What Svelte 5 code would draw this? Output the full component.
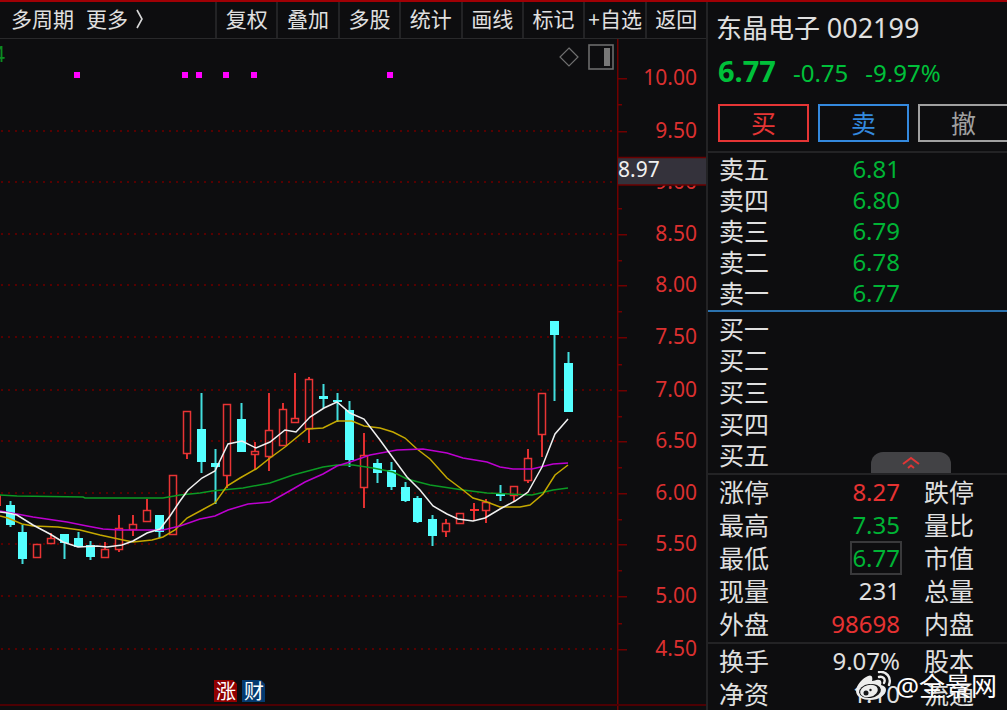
<script>
  const tools = ['复权', '叠加', '多股', '统计', '画线', '标记', '+自选', '返回'];

  const ticks = [
    ['10.00', 78], ['9.50', 131], ['9.00', 182], ['8.50', 234], ['8.00', 285], ['7.50', 337],
    ['7.00', 390], ['6.50', 441], ['6.00', 493], ['5.50', 544], ['5.00', 596], ['4.50', 649]
  ];
  const minorTicks = [104, 208, 260, 311, 364, 416, 467, 519, 570, 623];
  const eventDots = [77, 185, 199, 226, 254, 390];

  // x centre, body top, body bottom, wick top, wick bottom
  const rising = [
    [37, 544, 558, 544, 558], [51, 538, 544, 533, 544], [105, 549, 558, 542, 558],
    [119, 528, 550, 515, 552], [133, 524, 530, 515, 536], [147, 510, 522, 499, 522],
    [173, 475, 535, 475, 535], [187, 411, 454, 411, 459], [227, 404, 476, 404, 488],
    [255, 451, 455, 442, 469], [269, 430, 457, 393, 471], [283, 409, 446, 403, 446],
    [295, 418, 423, 373, 423], [309, 379, 429, 377, 443], [364, 455, 488, 433, 508],
    [446, 523, 532, 519, 537], [460, 513, 524, 513, 524], [474, 509, 511, 503, 521],
    [486, 502, 511, 499, 523], [514, 486, 496, 486, 501], [528, 458, 481, 449, 483],
    [542, 393, 435, 393, 457]
  ];
  const falling = [
    [10, 505, 525, 501, 527], [22, 532, 559, 525, 564], [64, 534, 543, 534, 559],
    [78, 538, 547, 532, 547], [90, 545, 557, 541, 560], [159, 515, 532, 515, 538],
    [201, 429, 462, 393, 473], [215, 463, 467, 449, 504], [241, 419, 452, 403, 452],
    [323, 396, 399, 384, 408], [337, 400, 402, 393, 422], [349, 410, 460, 401, 467],
    [377, 463, 473, 459, 483], [391, 470, 487, 462, 490], [405, 487, 501, 482, 502],
    [417, 498, 522, 496, 523], [432, 519, 536, 515, 546], [500, 494, 496, 485, 501],
    [554, 321, 335, 321, 401], [568, 363, 412, 352, 412]
  ];

  const averages = [
    ['#0c9a24', '0,495 17,496 83,497 85,498 163,498 180,495 200,493 212,491 243,488 270,483 293,475 323,467 337,465 353,465 373,468 393,472 407,479 430,485 463,490 487,493 532,495 553,490 568,488'],
    ['#c4a800', '0,516 8,518 22,524 33,526 58,527 80,530 100,535 123,540 133,542 152,540 163,537 175,530 187,518 202,510 215,503 227,486 240,478 256,469 270,458 285,447 307,429 323,428 337,421 352,421 364,426 380,428 393,432 405,438 417,449 430,459 447,478 463,490 473,498 487,502 500,507 520,507 530,505 543,494 555,475 568,465'],
    ['#bd00d0', '0,511 17,514 33,517 67,522 87,526 103,529 120,530 163,530 180,526 200,519 215,516 228,510 248,504 270,502 293,489 305,482 323,474 337,466 350,462 370,455 397,450 423,449 447,453 463,458 487,462 500,467 513,469 532,469 553,464 568,463'],
    ['#f0f0f0', '0,512 8,513 17,515 33,525 50,534 63,542 78,547 97,546 107,547 122,545 133,541 147,533 160,529 170,516 180,501 188,490 202,478 215,471 228,444 242,441 256,448 270,442 285,430 296,432 310,417 324,408 337,402 350,413 364,419 380,440 393,458 407,477 420,490 433,506 447,514 458,519 473,521 485,518 500,509 515,501 528,492 542,467 555,434 568,419']
  ];

  const asks = [['卖五', '6.81'], ['卖四', '6.80'], ['卖三', '6.79'], ['卖二', '6.78'], ['卖一', '6.77']];
  const bids = ['买一', '买二', '买三', '买四', '买五'];
  const stats = [
    ['涨停', '8.27', 'up', '跌停'],
    ['最高', '7.35', 'down', '量比'],
    ['最低', '6.77', 'down boxed', '市值'],
    ['现量', '231', 'plain', '总量'],
    ['外盘', '98698', 'up', '内盘']
  ];
  const ratios = [['换手', '9.07%', 'plain', '股本'], ['净资', '1.10', 'plain', '流通']];
</script>

<div class="terminal">
  <main>
    <nav class="toolbar">
      <div class="periods">
        <button>多周期</button>
        <button>更多
          <svg width="10" height="20" viewBox="0 0 10 20"><path d="M2 1 L7 10 L2 19" fill="none" stroke="#d8d8d8" stroke-width="1.6" /></svg>
        </button>
      </div>
      {#each tools as tool}
        <button class="tool">{tool}</button>
      {/each}
    </nav>

    <div class="chart">
      <svg class="plot" viewBox="0 39 706 671">
        <text class="count" x="-7" y="62">4</text>
        {#each ticks.slice(1) as [, y]}
          <line x1="1" x2="616" y1={y} y2={y} stroke="#560000" stroke-width="2" stroke-dasharray="2 5" />
        {/each}
        {#each eventDots as x}
          <rect x={x - 3} y="72" width="6" height="6" fill="#ff00ff" />
        {/each}

        <rect x="0" y="495" width="1" height="11" fill="#e03030" />
        {#each rising as [x, top, bottom, high, low]}
          {#if top > high}<rect x={x - 1} y={high} width="2" height={top - high} fill="#e03030" />{/if}
          {#if low > bottom}<rect x={x - 1} y={bottom} width="2" height={low - bottom} fill="#e03030" />{/if}
          {#if bottom - top < 3}
            <rect x={x - 4} y={top} width="9" height="2" fill="#ff3030" />
          {:else}
            <rect x={x - 3.5} y={top + 0.5} width="7" height={bottom - top - 1} fill="none" stroke="#e83434" stroke-width="1.5" />
          {/if}
        {/each}
        {#each falling as [x, top, bottom, high, low]}
          <rect x={x - 0.5} y={high} width="2" height={low - high} fill="#42dede" />
          <rect x={x - 4} y={top} width="9" height={bottom - top} fill="#54ffff" />
        {/each}
        {#each averages as [color, points]}
          <polyline {points} fill="none" stroke={color} stroke-width="1.5" />
        {/each}

        <g fill="#700000">
          <rect x="617" y="39" width="1.500" height="671" />
          <rect x="0" y="704" width="706" height="2" fill="#4c0003" />
          {#each ticks as [, y]}<rect x="618" y={y} width="9" height="1.500" />{/each}
          {#each minorTicks as y}<rect x="618" y={y} width="4" height="1.500" />{/each}
        </g>
        {#each ticks as [label, y]}
          <text class="axis" x="697" y={y + 7} text-anchor="end">{label}</text>
        {/each}
        <rect x="618" y="157" width="88" height="28" fill="#34323b" />
        <path d="M618 157.5H706M618 185H706" stroke="#680000" stroke-width="1.5" />
        <text class="cursor" x="618" y="177">8.97</text>

        <path d="M214 680H233L237 684V702H214Z" fill="#900000" />
        <path d="M242 680H261L265 684V702H242Z" fill="#043a70" />
        <text class="mark" x="226" y="699" text-anchor="middle">涨</text>
        <text class="mark" x="254" y="699" text-anchor="middle">财</text>
      </svg>
      <div class="chart-tools">
        <button aria-label="标记点">
          <svg width="20" height="20" viewBox="0 0 20 20"><path d="M10 1L19 10L10 19L1 10Z" fill="none" stroke="#707070" stroke-width="1.2" /></svg>
        </button>
        <button aria-label="侧栏">
          <svg width="26" height="26" viewBox="0 0 26 26"><rect x="1" y="1" width="24" height="24" fill="none" stroke="#6c6c6c" stroke-width="1.6" /><rect x="16" y="4" width="6" height="18" fill="#777" /></svg>
        </button>
      </div>
    </div>
  </main>

  <aside>
    <header>
      <h1>东晶电子 <span>002199</span></h1>
      <p class="quote"><b>6.77</b><span>-0.75</span><span>-9.97%</span></p>
      <div class="orders">
        <button class="buy">买</button>
        <button class="sell">卖</button>
        <button class="cancel">撤</button>
      </div>
    </header>

    <section class="asks">
      {#each asks as [level, price]}
        <div class="row"><span>{level}</span><span class="value down">{price}</span></div>
      {/each}
    </section>

    <section class="bids">
      {#each bids as level}
        <div class="row"><span>{level}</span></div>
      {/each}
      <button class="collapse" aria-label="收起">
        <svg width="18" height="14" viewBox="0 0 18 14"><path d="M1 8L9 2L17 8M6 12L9 9.500L12 12" fill="none" stroke="#e03535" stroke-width="2" /></svg>
      </button>
    </section>

    {#each [stats, ratios] as group}
      <section class="stats">
        {#each group as [name, value, tone, other]}
          <div class="row">
            <span>{name}</span><span class="value {tone}">{value}</span><span class="other">{other}</span>
          </div>
        {/each}
      </section>
    {/each}
  </aside>

  <div class="watermark">
    <svg width="37" height="30" viewBox="0 0 37 30">
      <path d="M13 5C8 7 1 14 1 20C1 26 8 29 15 29C24 29 31 24 31 19C31 16 29 15 26 14C27 11 26 9 24 9C22 8 19 10 17 10C18 7 17 3 13 5Z" fill="#ededed" />
      <ellipse cx="15" cy="20" rx="11" ry="7" fill="#161618" transform="rotate(-8 15 20)" />
      <ellipse cx="14" cy="20" rx="9" ry="6" fill="#ededed" transform="rotate(-15 14 20)" />
      <circle cx="11" cy="22" r="2.500" fill="#161618" />
      <circle cx="15.500" cy="19" r="1.200" fill="#161618" />
      <path d="M24 6C28 5 31 8 29 12M24 1C31 0 37 6 34 14" fill="none" stroke="#ededed" stroke-width="2.400" stroke-linecap="round" />
    </svg>
    <span>@全景网</span>
  </div>
</div>

<style>
  :global(body) {
    margin: 0;
    background: #0d0d0f;
  }

  .terminal {
    position: relative;
    display: flex;
    min-height: 100vh;
    box-sizing: border-box;
    border-top: 2px solid #a00005;
    overflow: hidden;
    color: #e0e0e0;
    background: #0d0d0f;
    font-family: 'Noto Sans', 'Noto Sans CJK SC', sans-serif;
  }

  button {
    margin: 0;
    padding: 0;
    border: 0;
    background: none;
    color: inherit;
    font: inherit;
    cursor: pointer;
  }

  main {
    flex: 1;
    min-width: 0;
  }

  .toolbar {
    display: flex;
    height: 36px;
    border-bottom: 1px solid #29292b;
    font-size: 21px;
    line-height: 34px;
    white-space: nowrap;
  }

  .periods {
    display: flex;
    flex: 0 0 204px;
    gap: 12px;
    padding-left: 11px;
  }

  .periods button {
    display: flex;
    align-items: center;
    gap: 7px;
    height: 34px;
  }

  .tool {
    flex: 1 1 0;
    min-width: 0;
    padding-bottom: 2px;
    border-left: 2px solid #232325;
    overflow: hidden;
  }

  .chart {
    position: relative;
  }

  .plot {
    display: block;
    width: 100%;
  }

  .plot text {
    font-size: 21px;
  }

  .plot .count {
    fill: #0c8c22;
  }

  .plot .axis {
    fill: #dc3030;
  }

  .plot .cursor {
    fill: #f0f0f0;
  }

  .plot .mark {
    fill: #fff;
    font-size: 20px;
  }

  .chart-tools {
    position: absolute;
    top: 5px;
    right: 92px;
    display: flex;
    align-items: center;
    gap: 9px;
  }

  .chart-tools button,
  .chart-tools svg {
    display: block;
  }

  aside {
    flex: 0 0 299px;
    min-width: 0;
    border-left: 2px solid #232325;
    font-size: 25px;
  }

  header {
    height: 149px;
    padding-left: 10px;
    overflow: hidden;
  }

  h1 {
    margin: 6px 0 0 -2px;
    font-size: 26px;
    font-weight: 400;
    line-height: 40px;
    white-space: nowrap;
  }

  h1 span {
    font-size: 27px;
  }

  .quote {
    display: flex;
    align-items: baseline;
    gap: 17px;
    margin: 0;
    color: #00c03a;
    font-size: 24px;
    line-height: 46px;
  }

  .quote b {
    font-size: 29px;
  }

  .orders {
    display: grid;
    grid-template-columns: repeat(3, 91px);
    gap: 9px;
    margin-top: 8px;
  }

  .orders button {
    height: 38px;
    border: 2px solid;
    line-height: 32px;
  }

  .buy {
    border-color: #d93030;
    color: #e53535;
  }

  .sell {
    border-color: #2a73b8;
    color: #3489de;
  }

  .cancel {
    border-color: #808083;
    color: #a0a0a0;
  }

  section {
    display: grid;
    grid-auto-rows: 1fr;
    padding-left: 11px;
    border-top: 2px solid #232325;
  }

  .asks {
    height: 156px;
    padding-bottom: 1px;
  }

  .bids {
    position: relative;
    height: 158px;
    padding-top: 1px;
    padding-bottom: 2px;
    border-color: #2b72ae;
  }

  .stats {
    padding-bottom: 2px;
    grid-auto-rows: 33px;
  }

  .stats:last-child {
    padding-bottom: 0;
  }

  .row {
    display: grid;
    grid-template-columns: 50px 131px 1fr;
    align-items: center;
    line-height: 30px;
    white-space: nowrap;
  }

  .value {
    justify-self: end;
    font-size: 24px;
  }

  .other {
    padding-left: 24px;
  }

  .up {
    color: #e63232;
  }

  .down {
    color: #00b435;
  }

  .boxed {
    outline: 2px solid #39393b;
  }

  .collapse {
    position: absolute;
    right: 56px;
    bottom: 0;
    display: grid;
    place-items: center;
    width: 80px;
    height: 21px;
    border-radius: 12px 12px 0 0;
    background: #424245;
  }

  .watermark {
    position: absolute;
    right: 10px;
    bottom: 7px;
    display: flex;
    align-items: center;
    gap: 4px;
    color: #fff;
    font-size: 26px;
    line-height: 34px;
  }
</style>
